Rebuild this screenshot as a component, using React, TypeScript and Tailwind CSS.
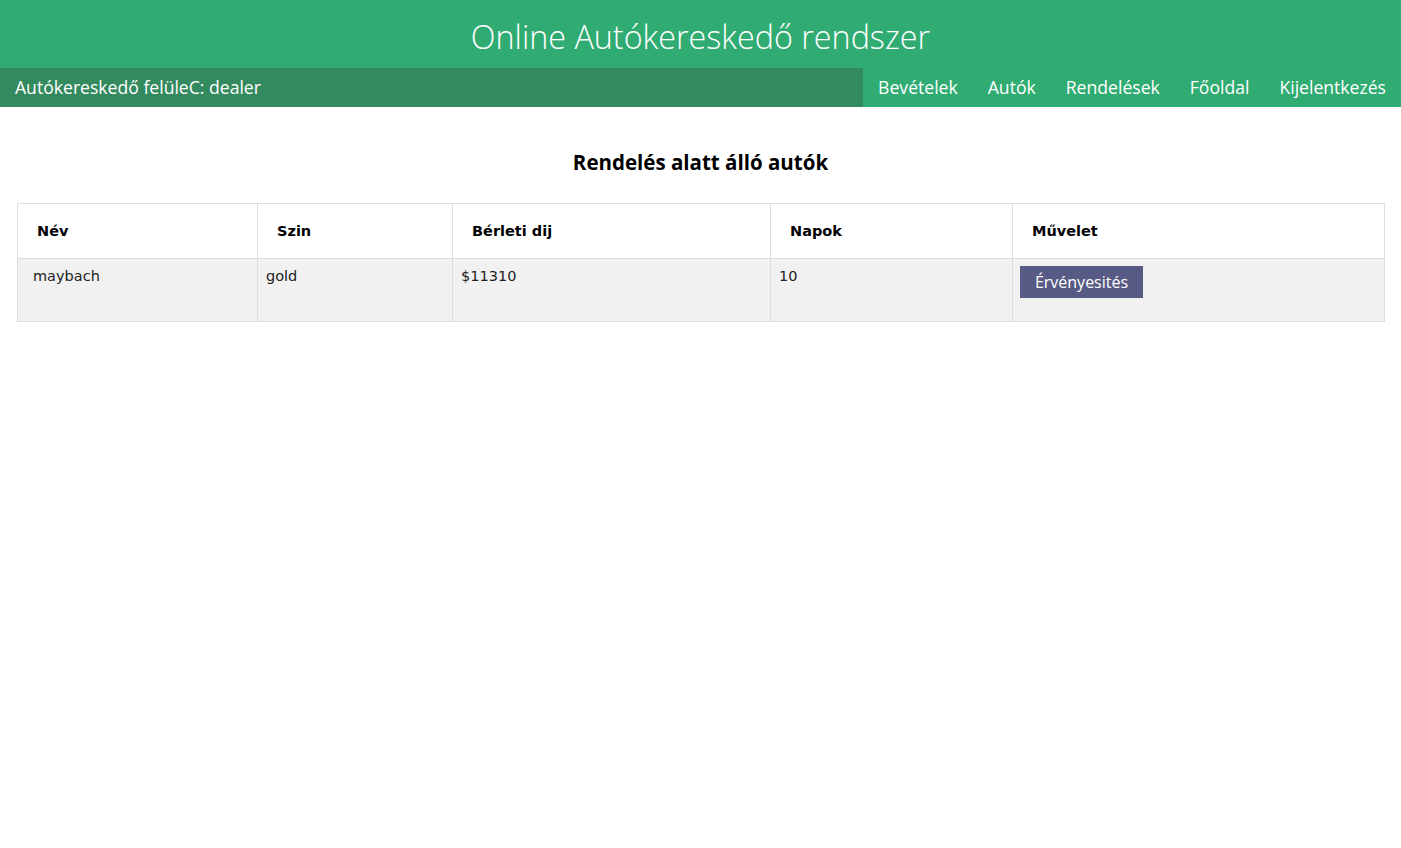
import React from "react";

export default function App() {
  const ui = { fontFamily: '"Open Sans", "Noto Sans", sans-serif' };
  const tbl = { fontFamily: '"DejaVu Sans", Verdana, sans-serif' };
  const links = ["Bevételek", "Autók", "Rendelések", "Főoldal", "Kijelentkezés"];
  return (
    <div className="min-h-[848px] bg-white">
      <header className="h-[68px] bg-[#30ac73] flex items-center justify-center">
        <h1 className="text-white text-[32.3px] font-light leading-none pt-[4px]" style={ui}>
          Online Autókereskedő rendszer
        </h1>
      </header>
      <nav className="h-[39px] bg-[#30ac73] flex text-white text-[17.6px] font-medium" style={ui}>
        <div className="flex-1 bg-[#348a5f] flex items-center pl-[15px]">Autókereskedő felüleC: dealer</div>
        {links.map((l) => (
          <a key={l} className="flex items-center px-[15px]">
            {l}
          </a>
        ))}
      </nav>
      <h2 className="text-center text-[20.5px] font-bold text-black mt-[42px] leading-[26px]" style={ui}>
        Rendelés alatt álló autók
      </h2>
      <div className="px-[17px] mt-[28px]">
        <table className="w-[1368px] border-collapse border border-[#dddddd] text-[14.5px] text-[#222]" style={tbl}>
          <thead>
            <tr className="h-[55px] bg-white text-black">
              <th className="w-[240px] text-left font-bold px-[19px] pt-[2px] border border-[#dddddd]">Név</th>
              <th className="w-[195px] text-left font-bold px-[19px] pt-[2px] border border-[#dddddd]">Szin</th>
              <th className="w-[318px] text-left font-bold px-[19px] pt-[2px] border border-[#dddddd]">Bérleti dij</th>
              <th className="w-[242px] text-left font-bold px-[19px] pt-[2px] border border-[#dddddd]">Napok</th>
              <th className="text-left font-bold px-[19px] pt-[2px] border border-[#dddddd]">Művelet</th>
            </tr>
          </thead>
          <tbody>
            <tr className="h-[63px] bg-[#f1f1f1] align-top">
              <td className="pl-[15px] pt-[7px] border border-[#dddddd]">maybach</td>
              <td className="pl-[8px] pt-[7px] border border-[#dddddd]">gold</td>
              <td className="pl-[8px] pt-[7px] border border-[#dddddd]">$11310</td>
              <td className="pl-[8px] pt-[7px] border border-[#dddddd]">10</td>
              <td className="pl-[7px] pt-[7px] border border-[#dddddd]">
                <button className="h-[32px] w-[123px] bg-[#575a85] text-white text-[16px]" style={ui}>
                  Érvényesités
                </button>
              </td>
            </tr>
          </tbody>
        </table>
      </div>
    </div>
  );
}
